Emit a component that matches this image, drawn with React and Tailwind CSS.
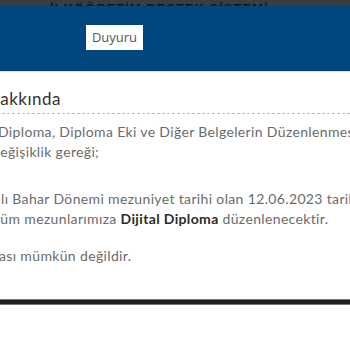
export default function App() {
  const body = { fontFamily: "Lato, 'Noto Sans', sans-serif" };

  return (
    <div className="relative w-[350px] h-[350px] overflow-hidden bg-white" style={body}>
      {/* page behind the modal, darkened */}
      <div className="h-[6px] overflow-hidden bg-[#3b3c3f]">
        <div
          className="pl-[50px] pt-[2px] text-[13px] font-bold leading-[13px] tracking-[1px] whitespace-nowrap text-[#151515]"
          style={{ fontFamily: "'Liberation Sans', sans-serif" }}
        >
          İLKÖĞRETİM DESTEK SİSTEMİ
        </div>
      </div>

      {/* modal header */}
      <div className="h-[65px] bg-[#00467f] pl-[86px] pt-[19px]">
        <div
          className="flex h-[25px] w-[57px] items-center justify-center bg-white text-[13px] text-[#555]"
          style={{ fontFamily: "'Open Sans', sans-serif" }}
        >
          Duyuru
        </div>
      </div>
      <div className="h-px bg-[#d9e1ea]" />

      {/* modal body */}
      <div className="pt-[16px]">
        <div className="ml-[-13px] border-b border-dashed border-[#bdbdbd] pb-[3px] text-[17px] leading-[22px] tracking-[0.5px] text-[#333] whitespace-nowrap">
          Hakkında
        </div>

        <div className="mt-[8px] text-[14px] leading-[20px] tracking-[0.35px] text-[#6b6b6b] whitespace-nowrap">
          <div className="ml-[-2px]">Diploma, Diploma Eki ve Diğer Belgelerin Düzenlenmesi</div>
          <div className="ml-[-8px]">değişiklik gereği;</div>
          <div className="mt-[27px] ml-[1px]">lı Bahar Dönemi mezuniyet tarihi olan 12.06.2023 tarihi</div>
          <div className="ml-[-5px]">
            tüm mezunlarımıza <span className="font-bold text-[#2b2b2b]">Dijital Diploma</span> düzenlenecektir.
          </div>
          <div className="mt-[17px] ml-[-1px]">ası mümkün değildir.</div>
        </div>
      </div>

      {/* modal footer edge */}
      <div className="mt-[33px] h-[6px] border-y border-[#777] bg-[#1f1f1f]" />
    </div>
  );
}
